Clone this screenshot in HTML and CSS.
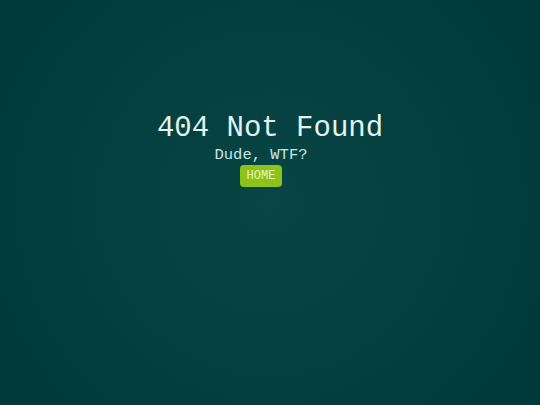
FILE: index.html
```html
<!DOCTYPE html>
<html>
<head>
<meta charset="utf-8">
<link rel="stylesheet" href="styles.css">
</head>
<body>
<main class="page">
  <h1 class="title">404 Not Found</h1>
  <p class="subtitle">Dude, WTF?</p>
  <a class="home" href="#">HOME</a>
</main>
</body>
</html>
```
FILE: styles.css
```css
html, body {
  margin: 0;
  padding: 0;
  height: 100%;
}
body {
  background: radial-gradient(circle at 50% 50%, #094545 0%, #053f3f 45%, #003939 100%);
  font-family: "Liberation Mono", "DejaVu Sans Mono", monospace;
  color: #e0f4f2;
}
.page {
  display: flex;
  flex-direction: column;
  align-items: center;
  padding-top: 112px;
}
.title {
  margin: 0;
  font-size: 29px;
  font-weight: normal;
  line-height: 34px;
}
.subtitle {
  margin: 0 18px 0 0;
  font-size: 15.5px;
  line-height: 19px;
  color: #c8e6e4;
}
.home {
  margin: 0 18px 0 0;
  display: block;
  background: #8cc21a;
  color: #e6f7b8;
  text-decoration: none;
  font-size: 12px;
  line-height: 22px;
  padding: 0 7px;
  border-radius: 4px;
}
```
